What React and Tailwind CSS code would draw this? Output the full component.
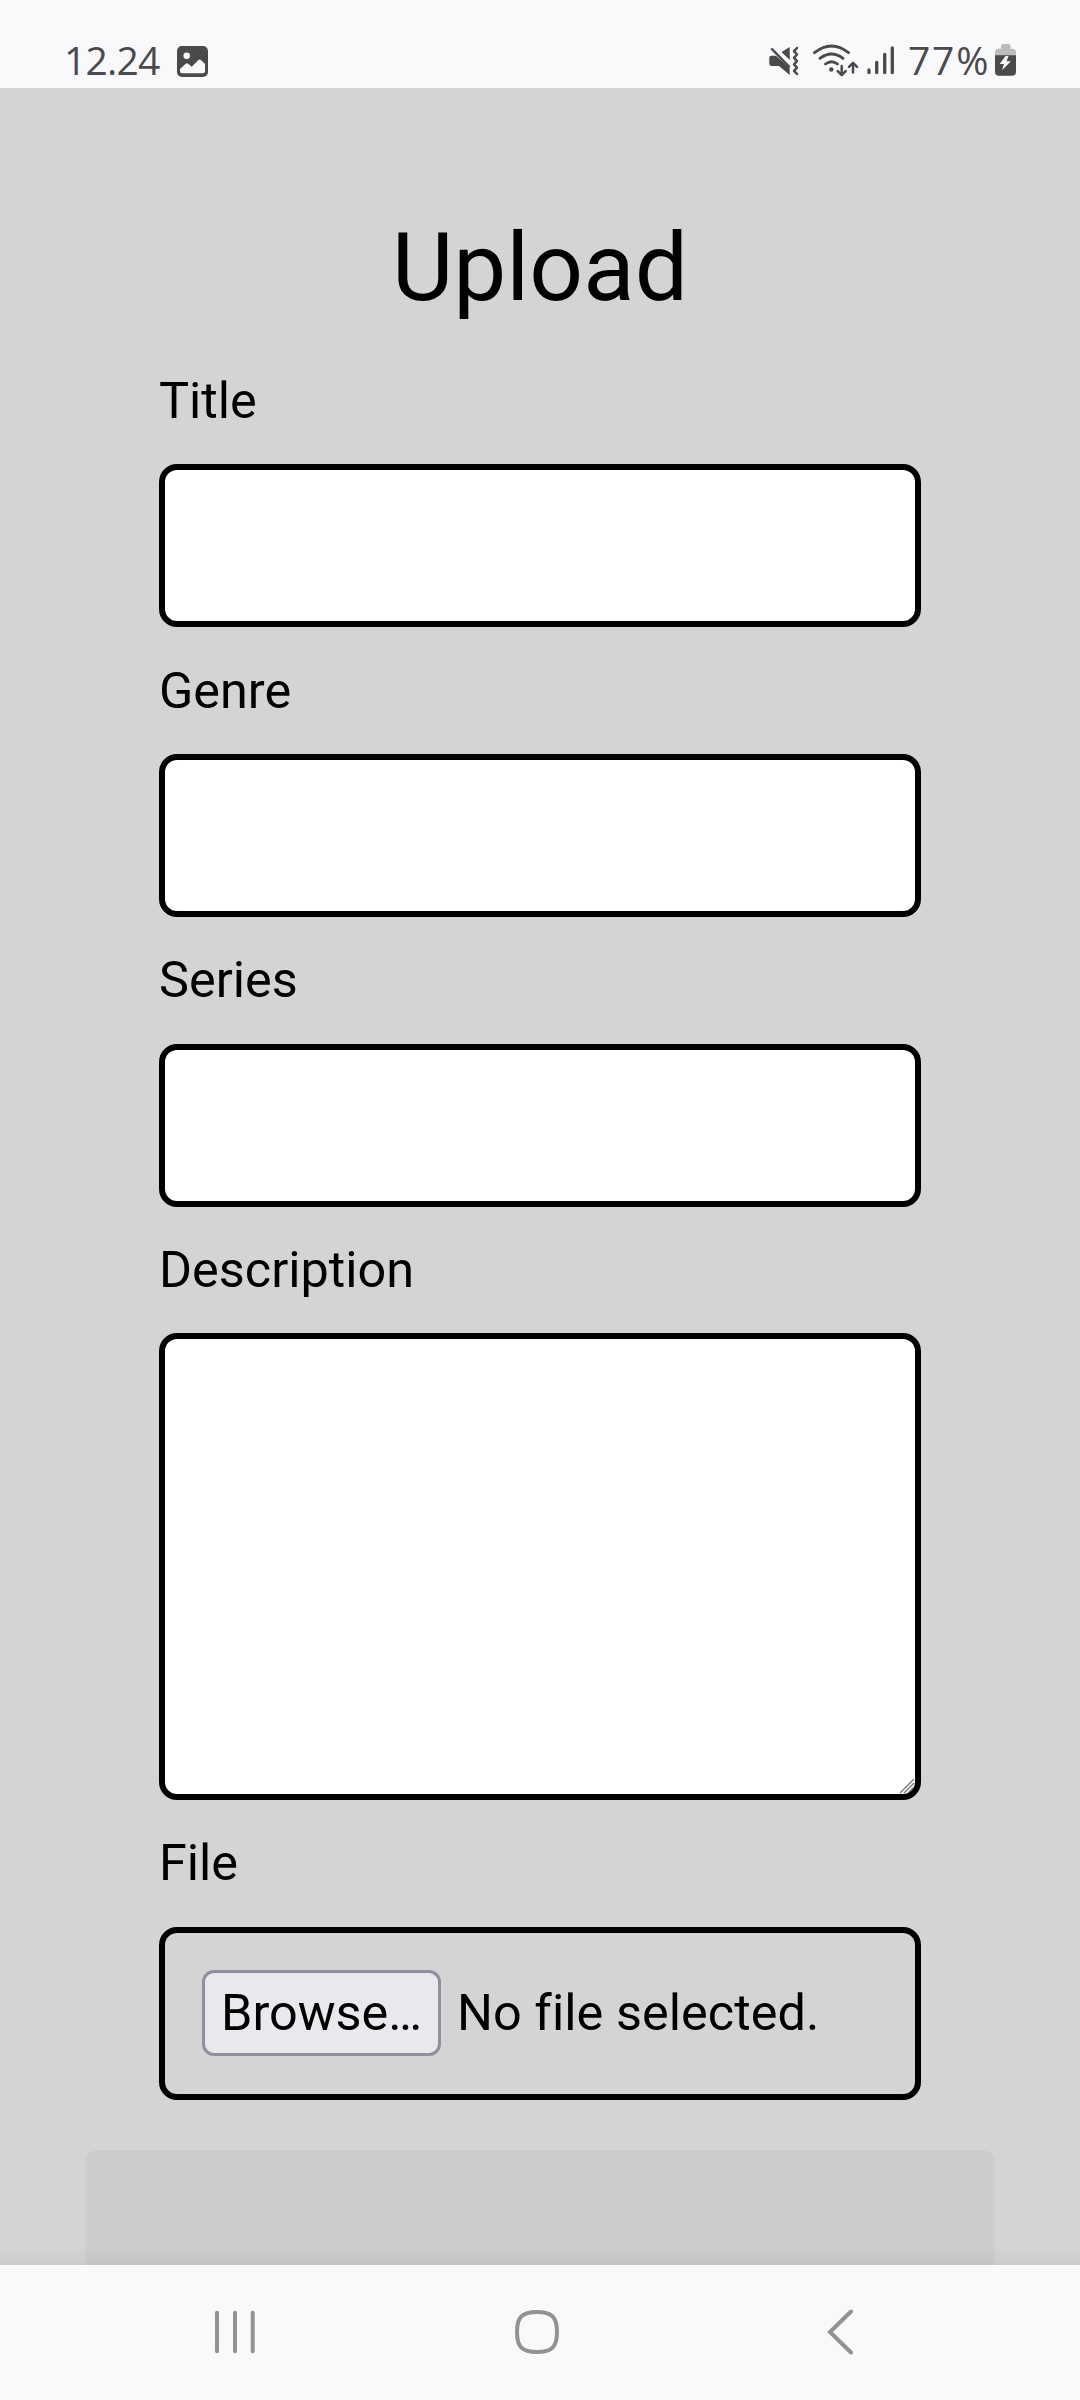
const S = '#4a4a4c';

function StatusBar() {
  return (
    <header className="flex h-[88px] shrink-0 items-start justify-between bg-[#f9f9fc] pt-[40px] pr-[64px] pl-[64px] font-['Open_Sans',sans-serif] text-[#4a4a4c]">
      <div className="flex items-start">
        <span className="w-[113px] text-[39px] leading-[40px] tracking-[-0.8px]">12.24</span>
        <svg width="31" height="31" viewBox="0 0 31 31" className="mt-[6px]">
          <rect width="31" height="31" rx="5" fill={S} />
          <circle cx="9.7" cy="9.7" r="3.3" fill="#f9f9fc" />
          <path d="M3 23l5.500-5q1.500-1.500 3 0l3.200 2.700 6.500-6.500q1.500-1.500 3 0L28 18v7.300q0 2-2 2H5q-2 0-2-2z" fill="#f9f9fc" />
        </svg>
      </div>
      <div className="flex items-start">
        <svg width="137" height="40" viewBox="766 40 137 40" className="mr-[5px]" fill="none" stroke={S} strokeWidth="2.8" strokeLinecap="round" strokeLinejoin="round">
          <path d="M769.300 58q0-2.300 2.300-2.300h4.400L789.700 68v7L779 66h-7.400q-2.300 0-2.300-2.300zM781.500 52l8.200-5v13z" fill={S} stroke="none" />
          <path d="M772 49.200L789 66.500" strokeWidth="2.4" />
          <path d="M797 48l-3 3.200 3 3.300-3 3.300 3 3.300-3 3.200 3 3.300-3 3.200 3 3.200" strokeWidth="2.5" />
          <path d="M814.500 52.700q17-13.500 34 0M820 58.300q11.500-8.500 23 0M825.500 64q6-4.500 12 0" />
          <circle cx="831.300" cy="69.500" r="2.200" fill={S} stroke="none" />
          <path d="M841.700 66v9m-4-3.800l4 4 4-4M853 72.500V63m-4 3.800l4-4 4 4" strokeWidth="2.500" />
          <path d="M869 70v2.500M876.700 62.500v10M884.700 54.500v18M892.300 48v24.500" strokeWidth="3.300" />
        </svg>
        <span className="w-[87px] text-[39px] leading-[40px] tracking-[1.800px]">77%</span>
        <svg width="21" height="33" viewBox="0 0 21 33" className="mt-[4px]">
          <path d="M6 2q0-2 2-2h5.500q2 0 2 2v2.700h2q3.500 0 3.500 3.500v4H0v-4q0-3.500 3.500-3.500H6z" fill="#bcbcbf" />
          <path d="M0 11.300h21v16.400q0 4-4 4H4q-4 0-4-4z" fill={S} />
          <path d="M10.500 12L4.700 20H9l-2 6.200 8.900-9h-4.400l2-5.200z" fill="#f9f9fc" />
        </svg>
      </div>
    </header>
  );
}

function Field({ label, className = '', labelClassName = 'mb-[33px]', children }) {
  return (
    <label className={'flex flex-col ' + className}>
      <span className={'text-[50.4px] leading-[60px] ' + labelClassName}>{label}</span>
      {children}
    </label>
  );
}

const BOX = 'box-border block w-full rounded-[18px] border-[6px] border-black';

export default function App() {
  return (
    <div className="flex h-[2400px] w-[1080px] flex-col overflow-hidden bg-[#d4d4d4] font-[Roboto,sans-serif] text-black">
      <StatusBar />
      <main className="relative flex min-h-0 flex-1 flex-col items-center overflow-hidden pt-[124px]">
        <h1 className="text-[94.5px] leading-[112px]">Upload</h1>
        <form className="mt-[47px] flex w-[762px] shrink-0 flex-col gap-[34px]">
          <Field label="Title"><input className={BOX + ' h-[163px] bg-white'} /></Field>
          <Field label="Genre"><input className={BOX + ' h-[163px] bg-white'} /></Field>
          <Field label="Series" className="-mt-px" labelClassName="mb-[34px]"><input className={BOX + ' h-[163px] bg-white'} /></Field>
          <Field label="Description" className="-mt-px">
            <span className={BOX + ' relative h-[467px] overflow-hidden bg-white'}>
              <textarea className="block size-full resize-none" />
              <svg width="16" height="16" viewBox="0 0 16 16" className="absolute right-0 bottom-0" stroke="#777" strokeWidth="1.300">
                <path d="M1 15L15 1M5 15L15 5M9 15L15 9" />
              </svg>
            </span>
          </Field>
          <Field label="File" className="-mt-px" labelClassName="mb-[34px]">
            <span className={BOX + ' flex h-[173px] items-start pt-[37px] pl-[37px] text-[50.4px] leading-[60px]'}>
              <button type="button" className="h-[86px] w-[239px] shrink-0 rounded-[12px] border-[3px] border-[#8f8f9d] bg-[#e9e9ed]">Browse…</button>
              <span className="mt-[13px] ml-[16px] whitespace-nowrap tracking-[0.06px]">No file selected.</span>
            </span>
          </Field>
        </form>
        <div className="mt-[50px] h-[160px] w-[910px] shrink-0 rounded-[13px] bg-[#cccccc]" />
        <div className="absolute inset-x-0 bottom-0 h-[18px] bg-gradient-to-b from-transparent to-black/4" />
      </main>
      <nav className="flex h-[135px] shrink-0 items-center bg-[#f9f9fc] pb-px pl-[214px]">
        <svg width="42" height="44" viewBox="0 0 42 44" stroke="#929292" strokeWidth="4" strokeLinecap="round">
          <path d="M3 2.700v38.600M21 2.700v38.600M38.700 2.700v38.600" />
        </svg>
        <svg width="44" height="44" viewBox="0 0 44 44" className="ml-[259px]" fill="none" stroke="#929292" strokeWidth="4">
          <path d="M22 2C37 2 42 7 42 22S37 42 22 42 2 37 2 22 7 2 22 2z" />
        </svg>
        <svg width="28" height="46" viewBox="0 0 28 46" className="ml-[267px]" fill="none" stroke="#929292" strokeWidth="4" strokeLinecap="round">
          <path d="M25 2.500L4 23l21 20.500" />
        </svg>
      </nav>
    </div>
  );
}
